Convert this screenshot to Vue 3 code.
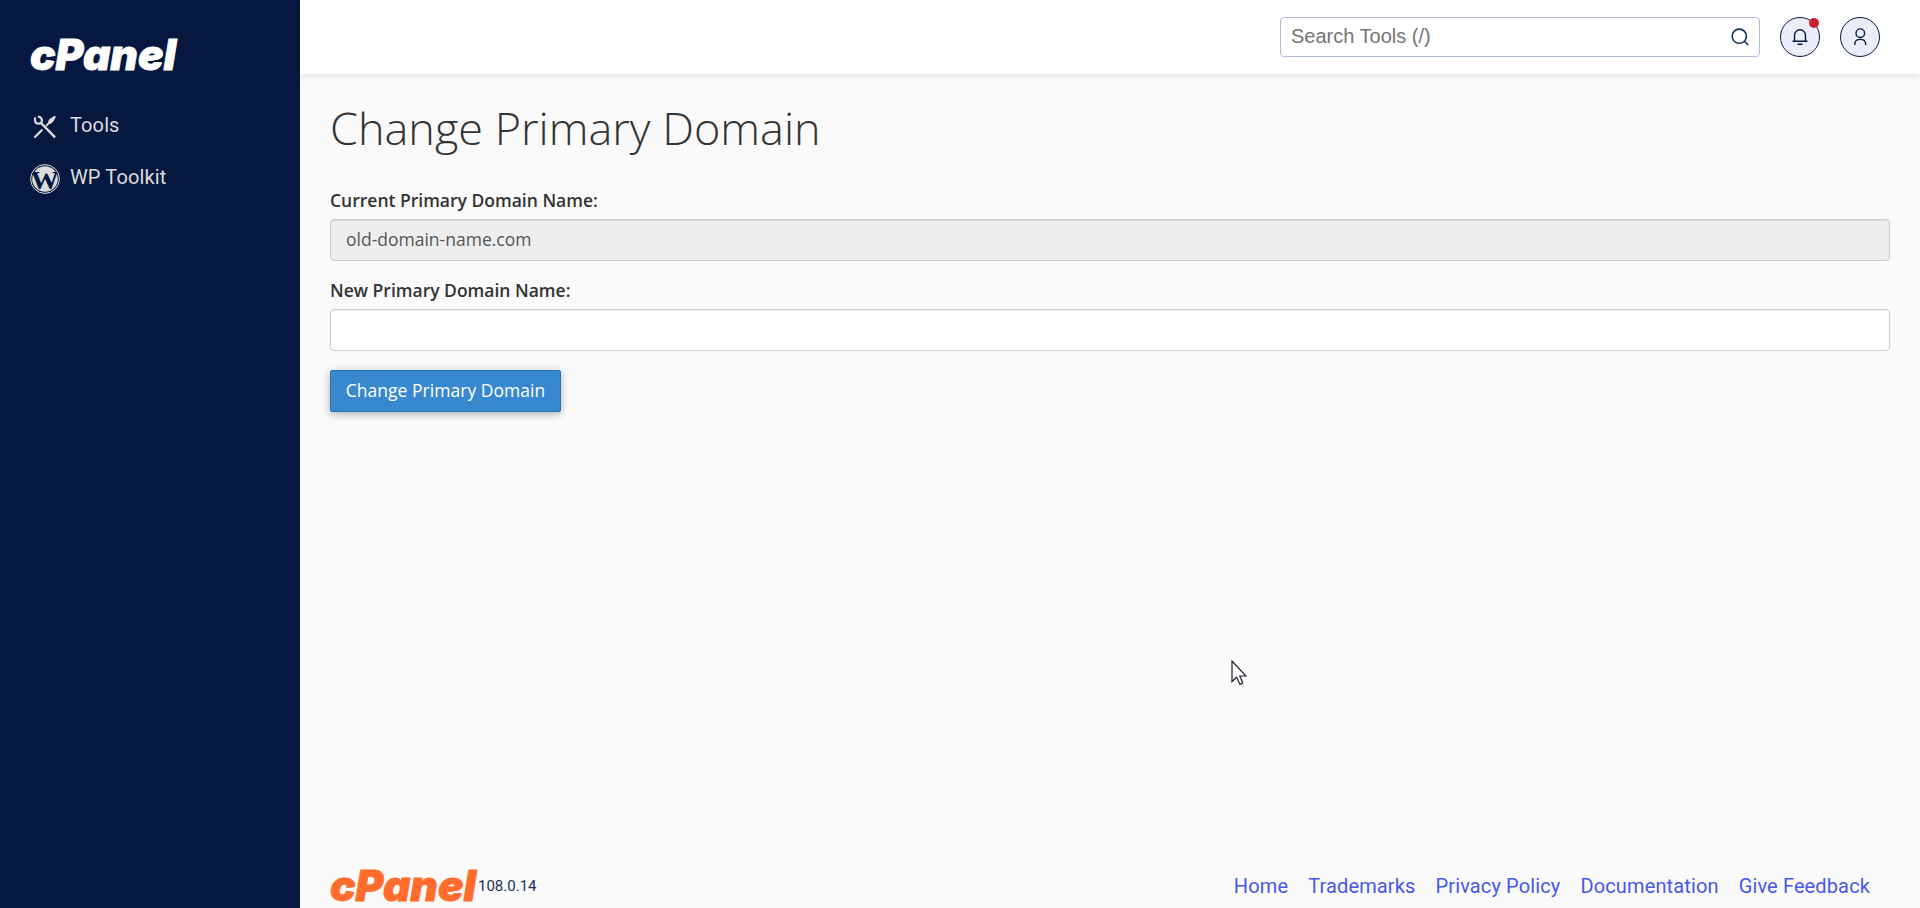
<script setup>
const links = ['Home', 'Trademarks', 'Privacy Policy', 'Documentation', 'Give Feedback']
</script>

<template>
  <div class="page">
    <aside class="sidebar">
      <svg class="logo" viewBox="0 -8 148 54" width="148" height="54" aria-label="cPanel">
        <text x="0" y="34.5" textLength="146" lengthAdjust="spacingAndGlyphs">cPanel</text>
      </svg>
      <nav class="nav">
        <a class="nav-item">
          <svg width="30" height="30" viewBox="0 0 30 30" fill="none" stroke="#dcdcdc" stroke-linecap="round">
            <path d="M11.5 11.5L24.4 24.7" stroke-width="2.5" />
            <path d="M5 6.2V8.5Q5.4 11.5 8.4 11.8Q12 11.4 12 8.2Q11.4 5 8.6 4.8" stroke-width="2.1" />
            <path d="M5 25L11.7 18.3" stroke-width="2.3" />
            <path d="M16.5 13.5L19.5 10.5" stroke-width="1.8" />
            <path d="M19 11Q17.8 9 20 7.2L24.8 4.2L25.4 5L22.5 10Q20.8 12 19 11Z" fill="#dcdcdc" stroke-width="1" />
          </svg>
          <span>Tools</span>
        </a>
        <a class="nav-item">
          <svg width="30" height="30" viewBox="0 0 30 30">
            <circle cx="15" cy="15" r="12.8" fill="#dcdcdc" />
            <text class="wp" x="0.5" y="25" textLength="28.5" lengthAdjust="spacingAndGlyphs">W</text>
            <circle cx="15" cy="15" r="14.4" fill="none" stroke="#dcdcdc" stroke-width="1" />
          </svg>
          <span>WP Toolkit</span>
        </a>
      </nav>
    </aside>

    <div class="body">
      <header class="topbar">
        <div class="search">
          <input type="text" placeholder="Search Tools (/)" />
          <svg width="18" height="18" viewBox="0 0 18 18" fill="none" stroke="#17315f" stroke-width="1.6">
            <circle cx="8.3" cy="8.2" r="7.1" /><path d="M13.2 13.1L17.2 17" />
          </svg>
        </div>
        <button class="round">
          <svg width="16" height="18" viewBox="0 0 16 18" fill="none" stroke="#081b45" stroke-width="1.4">
            <path d="M.5 13.2H15.5M2.5 13V7.3a5.5 5.5 0 0 1 11 0V13M5.5 16.3H10.5" />
          </svg>
          <span class="dot"></span>
        </button>
        <button class="round">
          <svg width="14" height="18" viewBox="0 0 14 18" fill="none" stroke="#081b45" stroke-width="1.4">
            <circle cx="7.3" cy="5.2" r="4.3" /><path d="M1.8 17V15.3Q2.5 11.4 7.2 11.4T12.6 15.3V17" />
          </svg>
        </button>
      </header>

      <main class="content">
        <h1>Change Primary Domain</h1>
        <label for="current">Current Primary Domain Name:</label>
        <input id="current" class="field" type="text" value="old-domain-name.com" disabled />
        <label for="next">New Primary Domain Name:</label>
        <input id="next" class="field" type="text" />
        <button class="submit">Change Primary Domain</button>
      </main>

      <footer class="footer">
        <svg class="logo orange" viewBox="0 -8 148 54" width="148" height="54" aria-label="cPanel">
          <text x="0" y="34.5" textLength="146" lengthAdjust="spacingAndGlyphs">cPanel</text>
        </svg>
        <span class="version">108.0.14</span>
        <nav class="links"><a v-for="link in links" :key="link">{{ link }}</a></nav>
      </footer>
    </div>

    <svg class="cursor" width="16" height="26" viewBox="0 0 16 26">
      <path d="M1 1V21.5L5.6 17.2L9 24.4L11.8 23L8.8 16H15Z" fill="#fff" stroke="#1c2030" stroke-width="1.2" />
    </svg>
  </div>
</template>

<style>
body { margin: 0; background: #fafafa; }
</style>

<style scoped>
* { box-sizing: border-box; }
.page { display: flex; height: 908px; overflow: hidden; position: relative; background: #fafafa; font-family: Roboto, sans-serif; }
.sidebar { width: 300px; background: #06183f; padding: 35px 30px; flex: none; }
.logo { display: block; flex: none; overflow: visible; margin: -8px 0 -6px; fill: #fff; stroke: #fff; stroke-width: .8px; stroke-linejoin: round; font-family: Inter, sans-serif; font-size: 42px; font-weight: 900; font-style: italic; }
.nav { margin-top: 35px; display: flex; flex-direction: column; gap: 22px; }
.nav-item { display: flex; align-items: center; gap: 10px; height: 30px; color: #dcdcdc; font-size: 20px; letter-spacing: .12px; }
.nav-item svg { margin-top: 3px; flex: none; overflow: visible; }
.nav-item span { line-height: 30px; }
.wp { font: bold 25px "Liberation Serif", serif; fill: #06183f; letter-spacing: 0; }
.body { flex: 1; display: flex; flex-direction: column; min-width: 0; }
.topbar { height: 74px; flex: none; background: #fff; box-shadow: 0 2px 8px rgba(0, 0, 0, .1); display: flex; justify-content: flex-end; align-items: center; gap: 20px; padding-right: 40px; }
.search { width: 480px; height: 40px; border: 1px solid #aebad4; border-radius: 4px; display: flex; align-items: center; padding: 0 10px; background: #fff; }
.search input { flex: 1; border: 0; outline: 0; padding: 0 0 2px; height: 38px; font: 20px "Liberation Sans", Arial, sans-serif; }
.search input::placeholder { color: #757575; opacity: 1; }
.round { position: relative; width: 40px; height: 40px; padding: 0; border: 1px solid #081b45; border-radius: 50%; background: #ebedfa; display: flex; align-items: center; justify-content: center; }
.dot { position: absolute; left: 28px; top: 0; width: 10px; height: 10px; border-radius: 50%; background: #cb2030; }
.content { flex: 1; padding: 24px 30px 0; font-family: "Open Sans", sans-serif; color: #333; display: flex; flex-direction: column; align-items: flex-start; }
h1 { margin: 0; font-size: 45px; line-height: 60px; font-weight: 300; }
label { font-size: 17.5px; font-weight: 600; line-height: 26px; margin-bottom: 6px; }
h1 + label { margin-top: 29px; }
.field { width: 100%; height: 42px; border: 1px solid #ccc; border-radius: 4px; padding: 0 15px 2px; font: 17.5px "Open Sans", sans-serif; color: #555; background: #fff; box-shadow: inset 0 1px 1px rgba(0, 0, 0, .075); margin: 0 0 16px; }
.field:disabled { background: #eee; }
.field + .submit { margin-top: 3px; }
.submit { width: 231px; height: 42px; padding: 0 0 2px; border: 1px solid #2a73b8; border-radius: 2px; background: #3888d0; color: #fff; font: 17.5px "Open Sans", sans-serif; letter-spacing: .04px; box-shadow: 0 2px 8px rgba(0, 0, 0, .3); }
.footer { height: 48px; padding: 4px 50px 0 30px; display: flex; align-items: center; color: #22315c; }
.version { font-size: 15px; }
.links { margin-left: auto; display: flex; gap: 20px; font-size: 20px; letter-spacing: .13px; color: #4758e8; }
.orange { fill: #ff6c2c; stroke: #ff6c2c; }
.cursor { position: absolute; left: 1231px; top: 660px; }
</style>
